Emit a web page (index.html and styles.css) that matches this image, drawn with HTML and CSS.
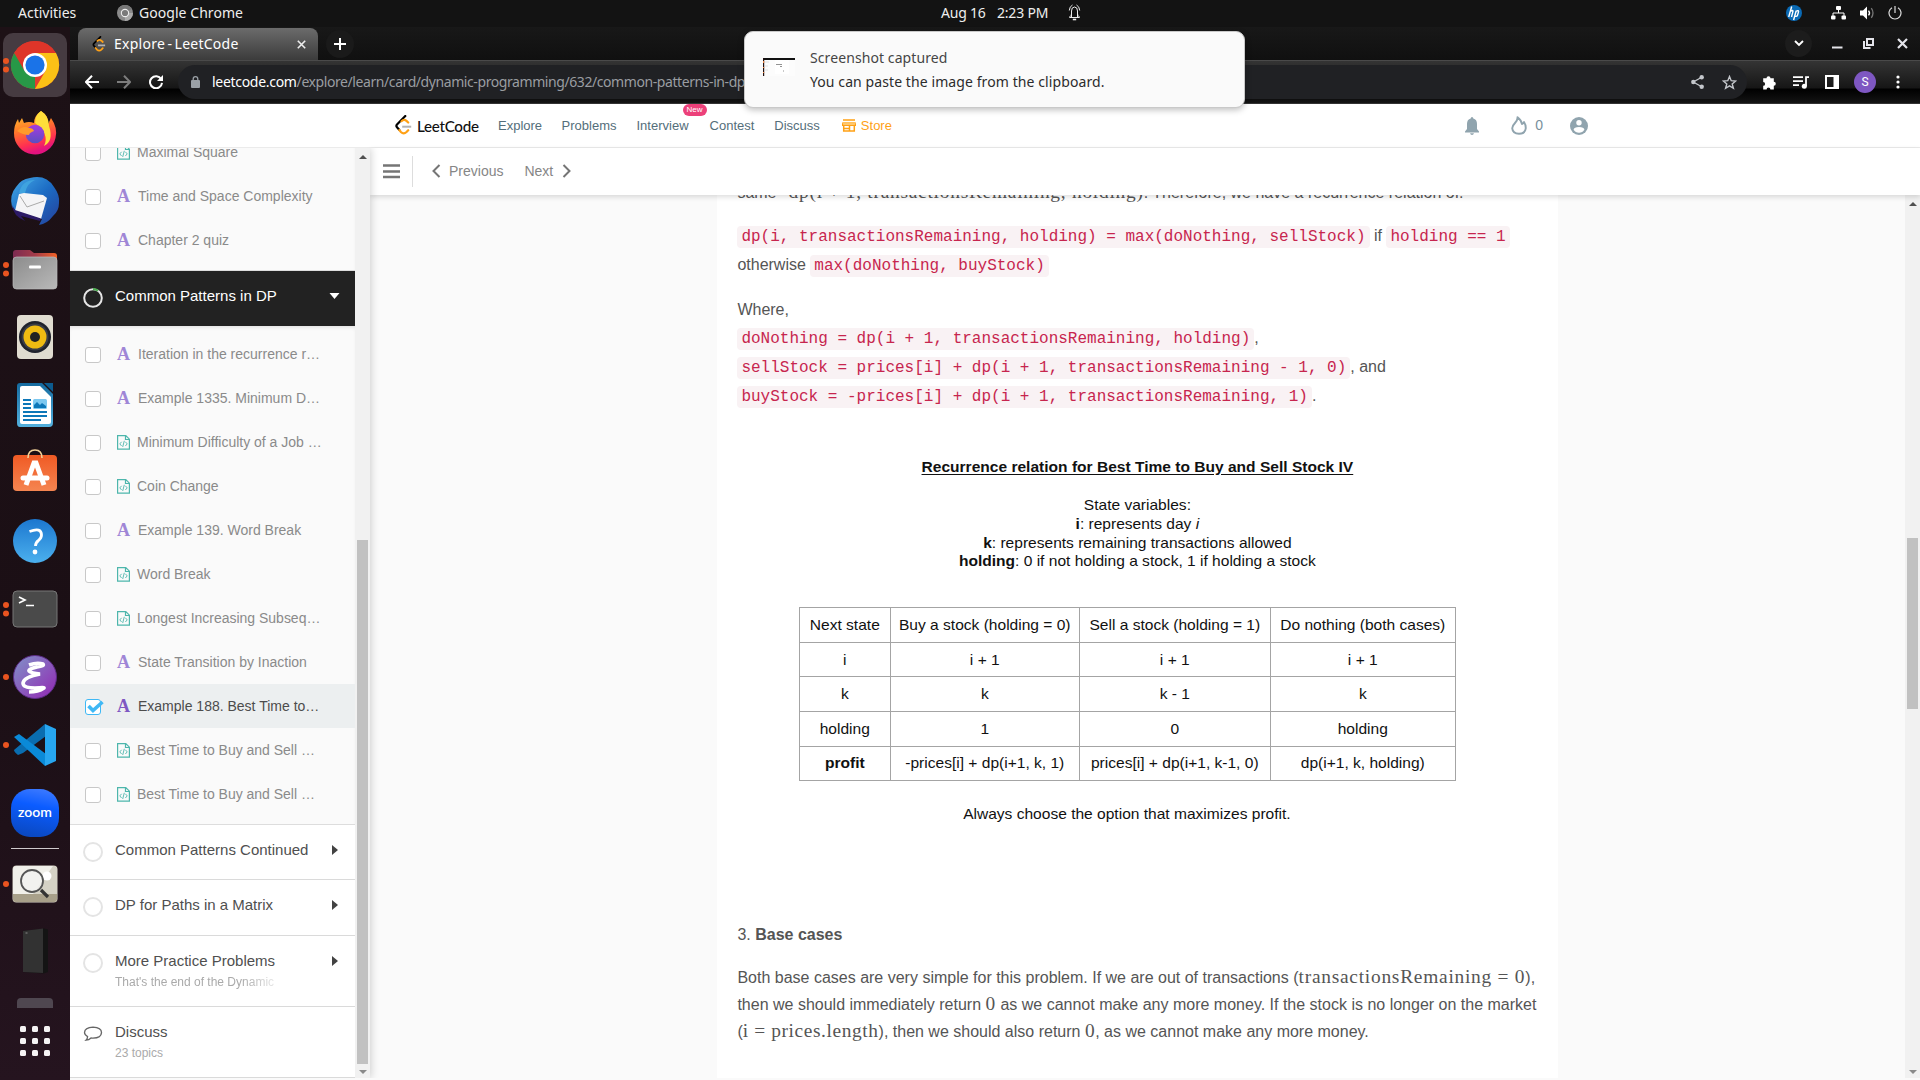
FILE: index.html
```html
<!DOCTYPE html>
<html lang="en">
<head>
<meta charset="utf-8">
<title>Explore - LeetCode</title>
<link rel="stylesheet" href="styles.css">
</head>
<body>
<svg class="defs" width="0" height="0" aria-hidden="true">
  <defs>
    <symbol id="code" viewBox="0 0 13 15"><path d="M.6.6h8.2l3.6 3.6v9.900H.6z M8.500.8v3.700h3.800" fill="none" stroke="#4db6ac" stroke-width="1.200"/><path d="M4.600 6.800 2.800 8.900l1.800 2.100M8.400 6.800l1.800 2.100-1.800 2.100M7.300 5.800 5.700 12" fill="none" stroke="#4db6ac" stroke-width=".9"/></symbol>
    <symbol id="leet" viewBox="0 0 17 20"><path d="M10.300 1 2 9.600q-1.200 1.300 0 2.600l2.200 2.500" fill="none" stroke="#000" stroke-width="2.200" stroke-linecap="round" class="leet-main"/><path d="M6.500 6.200q2.500-2.400 5-.3l1.700 1.600M4.300 15l1.600 2q2.800 2.700 5.600 0l1.700-1.800" fill="none" stroke="#ffa116" stroke-width="2.200" stroke-linecap="round"/><path d="M7.200 11.700h9" stroke="#b3b3b3" stroke-width="2"/></symbol>
    <linearGradient id="gGray" x2="1" y2="1"><stop stop-color="#8c8c8c"/><stop offset="1" stop-color="#b9b9b9"/></linearGradient>
    <linearGradient id="gFold"><stop stop-color="#7c2b51"/><stop offset=".5" stop-color="#a33b49"/><stop offset="1" stop-color="#f26327"/></linearGradient>
    <linearGradient id="gFox" x2=".3" y2="1"><stop stop-color="#ffcf2e"/><stop offset=".45" stop-color="#ff7a2a"/><stop offset=".8" stop-color="#ff3150"/><stop offset="1" stop-color="#e3127f"/></linearGradient>
    <linearGradient id="gEm" x2="1" y2="1"><stop stop-color="#8093c8"/><stop offset="1" stop-color="#9326b3"/></linearGradient>
    <linearGradient id="gBlue" x2="0" y2="1"><stop stop-color="#1c77cf"/><stop offset="1" stop-color="#4bb0ee"/></linearGradient>
    <linearGradient id="gBird" x2="1" y2="1"><stop stop-color="#45a9e6"/><stop offset=".5" stop-color="#1c6cc4"/><stop offset="1" stop-color="#253f9a"/></linearGradient>
    <linearGradient id="gOr" x2="0" y2="1"><stop stop-color="#f05a24"/><stop offset="1" stop-color="#f58551"/></linearGradient>
    <linearGradient id="gWr" x2="0" y2="1"><stop stop-color="#146a9f"/><stop offset="1" stop-color="#53b1de"/></linearGradient>
    <linearGradient id="gZoom" x1=".6" x2=".4" y2="1"><stop stop-color="#3a78ff"/><stop offset=".35" stop-color="#0b5cff"/><stop offset="1" stop-color="#0a48c0"/></linearGradient>
    <linearGradient id="gGlobe" x2="0" y2="1"><stop stop-color="#a63be0"/><stop offset="1" stop-color="#5a4fc0"/></linearGradient>
  </defs>
</svg>

<header class="topbar">
  <span class="activities">Activities</span>
  <svg class="app-ic" width="16" height="16" viewBox="0 0 16 16"><circle cx="8" cy="8" r="8" fill="#8b8b8b"/><path d="M8 8 1 4a8 8 0 0 1 14 0z" fill="#777"/><path d="M8 8h8a8 8 0 0 1-8 8z" fill="#aaa"/><circle cx="8" cy="8" r="4.200" fill="#eee"/><circle cx="8" cy="8" r="3.100" fill="#7a7a7a"/></svg>
  <span class="app-name">Google Chrome</span>
  <span class="date">Aug 16</span><span class="time">2:23 PM</span>
  <svg class="bell-ic" width="13" height="17" viewBox="0 0 13 17" fill="none" stroke="#eee"><path d="M1.300 13.500h10.400M3.500 13V7q0-4 3-4t3 4v6M1.300 6.500Q1.500 2.500 4.500 1M11.700 6.500Q11.500 2.500 8.500 1M1.500 13q2-1.500 2-3M11.500 13q-2-1.500-2-3"/><path d="M4.800 15.500h3.400" stroke-width="1.600"/></svg>
  <div class="tray">
    <svg width="16" height="16" viewBox="0 0 16 16"><circle cx="8" cy="8" r="8" fill="#0a6ab5"/><path d="M5.700 1.500 2.700 12M4.300 6.300q3-1.700 2.600.300L5.500 12M10.200 5.800 7.600 15M9.800 6.300q3.200-1.300 2.700.600l-1 3.400q-.400 1.400-2.600.900" fill="none" stroke="#fff" stroke-width="1.400"/></svg>
    <svg class="net" width="15" height="14" viewBox="0 0 15 14" fill="#fff"><rect x="5" width="5" height="4" rx="1"/><rect y="9.500" width="4.500" height="4" rx="1"/><rect x="10.500" y="9.500" width="4.500" height="4" rx="1"/><path d="M7.500 4v3M2 10V7h11v3" fill="none" stroke="#fff"/></svg>
    <svg class="vol" width="15" height="14" viewBox="0 0 15 14"><path d="M0 4.500h3L7 .500v13l-4-4H0z" fill="#fff"/><path d="M8.500 4.600q2 2.400 0 4.800" fill="none" stroke="#fff" stroke-width="1.400"/><path d="M11.300 2.200q3.400 4.800 0 9.600" fill="none" stroke="#777" stroke-width="1.300"/></svg>
    <svg class="pow" width="14" height="14" viewBox="0 0 14 14" fill="none" stroke="#ddd" stroke-width="1.200"><path d="M7 0v7M4 1.800a6 6 0 1 0 6 0"/></svg>
  </div>
</header>

<div class="desktop">
<nav class="dock">
  <div class="slot two active"><svg viewBox="0 0 70 68"><circle cx="35" cy="34" r="24" fill="#e33b2e"/><path d="M14.200 22 35 34 35 58A24 24 0 0 1 14.200 22z" fill="#279847"/><path d="M35 22h21A24 24 0 0 1 35 58l10.400-18z" fill="#fbc116"/><path d="M14.200 22A24 24 0 0 1 55.800 22H35L24.600 40z" fill="#de3529"/><circle cx="35" cy="34" r="12" fill="#fff"/><circle cx="35" cy="34" r="9.600" fill="#1a73e8"/></svg></div>
  <div class="slot"><svg viewBox="0 0 70 68"><path d="M41 12q8 5 7 13l3-6q7 10 4.500 20A21 21 0 0 1 14 34q0-8 4-14l1 4 3-5 2 5q5-2 10 0 0-7 7-12z" fill="url(#gFox)"/><path d="M35 24q0-8 6-12 8 5 8 15 5 15-5 20 6-12-9-23z" fill="#ffde3a"/><circle cx="35" cy="35" r="9.300" fill="url(#gGlobe)"/><path d="M17 32q6-6 12-3 4 0 5 3-5 2-5 4-6 0-12-4z" fill="#ff9a2b"/></svg></div>
  <div class="slot"><svg viewBox="0 0 70 68"><path d="M30 11q16-4 24 9 6 8 5 16 0 8-6 13-6 8-14 9l3-6-22-4-8-8q-3-12 4-20 5-8 14-9z" fill="url(#gBird)"/><path d="M15 44 19 27 24 26 43 28 47 31 41 52z" fill="#f4f4f6"/><path d="m20 29 7 11 17-6" fill="none" stroke="#aaa"/><path d="M12 38q1 11 13 16l-4-5 19 5 1-2.500L15 43z" fill="#2c1a66"/><path d="M19 26q3-13 16-13-8 3-10 13z" fill="#3fa3df"/></svg></div>
  <div class="slot two"><svg viewBox="0 0 70 68"><path d="M13 36V18q0-3 3-3h14l4 3h20q3 0 3 3v12z" fill="url(#gFold)"/><rect x="13" y="22" width="44" height="32" rx="3.500" fill="url(#gGray)" stroke="#bbb" stroke-width=".7"/><rect x="29" y="30.500" width="12" height="3" rx="1" fill="#fff"/></svg></div>
  <div class="slot"><svg viewBox="0 0 70 68"><rect x="17" y="12" width="36" height="44" rx="4" fill="#e0dcd0"/><circle cx="35" cy="34" r="16" fill="#1f222c"/><circle cx="35" cy="34" r="13.500" fill="#3a3d46"/><circle cx="35" cy="34" r="11.500" fill="#efbb12"/><circle cx="35" cy="34" r="5" fill="#222"/></svg></div>
  <div class="slot"><svg viewBox="0 0 70 68"><path d="M20 12h22l11 11v29q0 4-4 4H20q-3 0-3-4V15q0-3 3-3z" fill="url(#gWr)"/><path d="M20 17q0-2 2-2h18l11 11v25q0 2-2 2H22q-2 0-2-2z" fill="#fff"/><path d="M44 12h9v9z" fill="#0c5b8f"/><path d="M23 29h8M23 33h8M23 37h8M23 41h24M23 45h24M23 49h18" stroke="#0d77b8" stroke-width="1.800"/><rect x="33" y="28" width="14" height="10" rx="1.500" fill="#7cc8f0"/><path d="M34 37v-3l3-3 3 3 2-2 4 3v2z" fill="#0d77b8"/></svg></div>
  <div class="slot"><svg viewBox="0 0 70 68"><rect x="13" y="16" width="44" height="36" rx="4" fill="url(#gOr)"/><path d="M28 19q0-8 7-8t7 8" fill="none" stroke="#f3d29a" stroke-width="1.600"/><path d="m26 46 8-22h2l8 22" fill="none" stroke="#fff" stroke-width="5"/><path d="M23 39h24" stroke="#fff" stroke-width="5" stroke-linecap="round"/></svg></div>
  <div class="slot"><svg viewBox="0 0 70 68"><circle cx="35" cy="34" r="22" fill="url(#gBlue)"/><path d="M29.500 24.500q12-4.500 12 3.500 0 3-3 5.500-3 2-3 5.500" fill="none" stroke="#fff" stroke-width="2.800"/><circle cx="35" cy="45" r="2.400" fill="#fff"/></svg></div>
  <div class="slot two"><svg viewBox="0 0 70 68"><rect x="13" y="16" width="44" height="36" rx="4" fill="#4a4a4a" stroke="#777"/><path d="m19 22 6 3-6 3M26 30.500h8" fill="none" stroke="#fff" stroke-width="1.700"/></svg></div>
  <div class="slot one"><svg viewBox="0 0 70 68"><circle cx="35" cy="34" r="21.500" fill="url(#gEm)" stroke="#5b2b84"/><path d="M29 22q8-3 14-1 2 2-6 3-9 2-8 4 2 2 11 3-16 3-17 9 0 5 12 5 10-1 9 0-6 4-15 4" fill="none" stroke="#fff" stroke-width="3.600"/></svg></div>
  <div class="slot one"><svg viewBox="0 0 70 68"><path d="m45 13-31 26q0 2 4 5l5-2 23-17z" fill="#0a6db0"/><path d="m14 26 5-3 27 20-1 12z" fill="#0a8ad8"/><path d="m45 13 11 5v32l-11 5z" fill="#27a6f0"/></svg></div>
  <div class="slot"><svg viewBox="0 0 70 68"><rect x="11" y="10" width="48" height="48" rx="19" fill="url(#gZoom)"/><text x="35" y="38" text-anchor="middle" class="zoom-t" textLength="34">zoom</text></svg></div>
  <div class="sep"></div>
  <div class="slot one"><svg viewBox="0 0 70 68"><rect x="12.500" y="15.500" width="45" height="37" rx="4" fill="#d5d2c5"/><path d="M13 20q0-4 4-4h36L33 44H13z" fill="#f1f0ea"/><path d="M13 44h44v5q0 3-3 3H16q-3 0-3-3z" fill="#a8a08a"/><circle cx="47" cy="26" r="4.500" fill="#fff"/><circle cx="32" cy="31" r="11" fill="#f3f3f0" fill-opacity=".8" stroke="#555" stroke-width="1.800"/><path d="m41 40 7 7" stroke="#333" stroke-width="3.200"/></svg></div>
  <div class="slot"><svg viewBox="0 0 70 68"><path d="m23 13 21-2.500 4 1V54l-4 1.500L23 54z" fill="#141414"/><path d="m23 13 20-2.500V55L23 54z" fill="#323232"/><path d="M25.500 15h2" stroke="#888"/></svg></div>
  <div class="slot cut"><svg viewBox="0 0 70 68"><path d="M17 22v-6q0-4 4-4h28q4 0 4 4v6z" fill="#4f4750"/></svg></div>
  <div class="grid"><i></i><i></i><i></i><i></i><i></i><i></i><i></i><i></i><i></i></div>
</nav>

<div class="window">
  <div class="tabs">
    <div class="tab">
      <svg class="fav" width="14" height="16" viewBox="0 0 17 20"><use href="#leet"/></svg>
      <span class="tab-t">Explore - LeetCode</span>
      <svg class="x" width="9" height="9" viewBox="0 0 9 9"><path d="m.8.800 7.400 7.400m0-7.400L.8 8.200" stroke="#eee" stroke-width="1.600"/></svg>
    </div>
    <div class="plus"><svg width="12" height="12" viewBox="0 0 12 12"><path d="M6 0v12M0 6h12" stroke="#fff" stroke-width="2"/></svg></div>
    <div class="controls">
      <span class="chev"><svg width="10" height="7" viewBox="0 0 10 7"><path d="m1 1 4 4 4-4" fill="none" stroke="#fff" stroke-width="1.900"/></svg></span>
      <svg class="c1" width="11" height="11" viewBox="0 0 11 11"><path d="M0 9.500h10.500" stroke="#e4e4ea" stroke-width="2"/></svg>
      <svg class="c2" width="11" height="11" viewBox="0 0 11 11"><path d="M4 1h6v6H4z M1 3v7h6.500" fill="none" stroke="#e4e4ea" stroke-width="2"/></svg>
      <svg class="c3" width="11" height="11" viewBox="0 0 11 11"><path d="m1 1 9 9m0-9-9 9" stroke="#e4e4ea" stroke-width="2.200"/></svg>
    </div>
  </div>
  <div class="toolbar">
    <svg width="14" height="14" viewBox="0 0 14 14"><path d="M14 7H1.500M7 .800.900 7 7 13.200" fill="none" stroke="#fff" stroke-width="2"/></svg>
    <svg width="14" height="14" viewBox="0 0 14 14"><path d="M0 7h12.500M7 .800 13.100 7 7 13.200" fill="none" stroke="#7d7d7d" stroke-width="2"/></svg>
    <svg width="14" height="14" viewBox="0 0 14 14"><path d="M12.200 4.200A6 6 0 1 0 13 7.800" fill="none" stroke="#fff" stroke-width="2"/><path d="M14 0v6H8z" fill="#fff"/></svg>
    <div class="omni">
      <svg width="9" height="12" viewBox="0 0 9 12"><rect y="4" width="9" height="8" rx="1" fill="#9aa0a6"/><path d="M2.200 4.500V3a2.300 2.300 0 0 1 4.600 0v1.500" fill="none" stroke="#9aa0a6" stroke-width="1.300"/></svg>
      <span class="url"><b>leetcode.com</b>/explore/learn/card/dynamic-programming/632/common-patterns-in-dp</span>
      <svg class="share" width="13" height="14" viewBox="0 0 13 14"><g fill="#c4c7cc"><circle cx="10.700" cy="2.300" r="2.200"/><circle cx="2.300" cy="7" r="2.200"/><circle cx="10.700" cy="11.700" r="2.200"/></g><path d="M10.700 2.300 2.300 7l8.400 4.700" fill="none" stroke="#c4c7cc" stroke-width="1.300"/></svg>
      <svg width="15" height="15" viewBox="0 0 15 15"><path d="m7.500 1.500 1.700 4.200 4.500.300-3.500 2.900 1.200 4.400-3.900-2.500-3.900 2.500 1.200-4.400L1.300 6l4.500-.300z" fill="none" stroke="#c4c7cc" stroke-width="1.400"/></svg>
    </div>
    <div class="ext">
      <svg width="15" height="15" viewBox="0 0 15 15"><path d="M1.200 3.200h3.300a2 2 0 1 1 4 0h3.300v3.600a2 2 0 1 1 0 4v3.700H8.400a1.900 1.900 0 0 0-3.800 0H1.200v-3.700a1.900 1.900 0 0 0 0-3.800z" fill="#fff"/></svg>
      <svg width="16" height="13" viewBox="0 0 16 13"><path d="M0 1.200h10M0 5.200h10M0 9.200h6M13 10V1.200h3" fill="none" stroke="#fff" stroke-width="1.800"/><circle cx="11.300" cy="10.300" r="2.500" fill="#fff"/></svg>
      <svg width="14" height="14" viewBox="0 0 14 14"><path d="M1 1h12v12H1z" fill="none" stroke="#fff" stroke-width="2"/><path d="M8.500 1H13v12H8.500z" fill="#fff"/></svg>
      <span class="me">S</span>
      <svg class="dots" width="4" height="14" viewBox="0 0 4 14" fill="#fff"><circle cx="2" cy="2" r="1.600"/><circle cx="2" cy="7" r="1.600"/><circle cx="2" cy="12" r="1.600"/></svg>
    </div>
  </div>

  <div class="nav">
    <svg class="logo" width="17" height="20"><use href="#leet"/></svg>
    <span class="brand">LeetCode</span>
    <a>Explore</a><a>Problems</a><a class="iv">Interview<em>New</em></a><a class="ct">Contest</a><a>Discuss</a>
    <a class="store"><svg width="14" height="13" viewBox="0 0 14 13"><path d="M1 1h12M1 4l-.4 2.300h12.800L13 4z M1.700 6.500V12h10.600V6.500M7.500 6.500V12M1.700 9.500h5.800" fill="none" stroke="#ffa116" stroke-width="1.500"/><path d="M1 3.300h12v2.500H1z" fill="#ffc568"/></svg>Store</a>
    <div class="user">
      <svg class="ub" width="14" height="18" viewBox="0 0 14 18" fill="#90a4ae"><path d="M7 0q1.300 0 1.300 1.600Q12 2.600 12 7v5l2 2.500V15.500H0V14.500L2 12V7q0-4.400 3.700-5.400Q5.700 0 7 0z"/><path d="M5 16.300h4Q8.500 18 7 18t-2-1.700z"/></svg>
      <svg class="fl" width="16" height="19" viewBox="0 0 16 19"><path d="M6.500 1.200Q6.800 4 4 7 1.200 10 1.200 12.200 1.700 17.800 8 17.800t6.800-5.600q0-3.700-1.800-6.200-.6 1.700-2 2Q10.500 4.500 6.500 1.200z" fill="none" stroke="#90a4ae" stroke-width="1.900" stroke-linejoin="round"/></svg>
      <span>0</span>
      <svg class="av" width="18" height="18" viewBox="0 0 18 18"><circle cx="9" cy="9" r="9" fill="#90a4ae"/><circle cx="9" cy="5.700" r="2.700" fill="#fff"/><path d="M3.600 12.800Q4 10 9 10t5.400 2.800Q12.500 15.800 9 15.800t-5.400-3z" fill="#fff"/></svg>
    </div>
  </div>

  <div class="page">
    <aside class="side">
      <div class="side-list">
        <div class="items first">
          <div class="it code"><i></i><svg><use href="#code"/></svg>Maximal Square</div>
          <div class="it"><i></i><s>A</s>Time and Space Complexity</div>
          <div class="it"><i></i><s>A</s>Chapter 2 quiz</div>
        </div>
        <div class="chap open"><svg class="ring" viewBox="0 0 20 20"><circle cx="10" cy="10" r="8.800" fill="none" stroke="#e6e6e6" stroke-width="2"/><path d="M10 1.200a8.800 8.800 0 0 1 5 1.500" fill="none" stroke="#4caf50" stroke-width="2.200"/></svg><div><h4>Common Patterns in DP</h4></div><svg class="car" viewBox="0 0 11 12"><path d="M.5 3h10L5.500 9z" fill="#fff"/></svg></div>
        <div class="items">
          <div class="it"><i></i><s>A</s>Iteration in the recurrence r…</div>
          <div class="it"><i></i><s>A</s>Example 1335. Minimum D…</div>
          <div class="it code"><i></i><svg><use href="#code"/></svg>Minimum Difficulty of a Job …</div>
          <div class="it code"><i></i><svg><use href="#code"/></svg>Coin Change</div>
          <div class="it"><i></i><s>A</s>Example 139. Word Break</div>
          <div class="it code"><i></i><svg><use href="#code"/></svg>Word Break</div>
          <div class="it code"><i></i><svg><use href="#code"/></svg>Longest Increasing Subseq…</div>
          <div class="it"><i></i><s>A</s>State Transition by Inaction</div>
          <div class="it sel"><i><svg viewBox="0 0 18 14"><path d="m2.500 6 4.500 4.500L16.500 2" fill="none" stroke="#3fb8f5" stroke-width="3.600"/></svg></i><s>A</s>Example 188. Best Time to…</div>
          <div class="it code"><i></i><svg><use href="#code"/></svg>Best Time to Buy and Sell …</div>
          <div class="it code"><i></i><svg><use href="#code"/></svg>Best Time to Buy and Sell …</div>
        </div>
        <div class="chap"><b class="o"></b><div><h4>Common Patterns Continued</h4></div><svg class="car" viewBox="0 0 11 12"><path d="M3 1v10l6-5z" fill="#424242"/></svg></div>
        <div class="chap c56"><b class="o"></b><div><h4>DP for Paths in a Matrix</h4></div><svg class="car" viewBox="0 0 11 12"><path d="M3 1v10l6-5z" fill="#424242"/></svg></div>
        <div class="chap tall"><b class="o"></b><div><h4>More Practice Problems</h4><p class="fade">That's the end of the Dynamic</p></div><svg class="car" viewBox="0 0 11 12"><path d="M3 1v10l6-5z" fill="#424242"/></svg></div>
        <div class="chap tall"><svg class="ring talk" viewBox="0 0 20 20"><path d="M10 3.200q8.500.500 8.500 5.400-.3 5.400-8.500 5.600-1 0-2-.2-2 2-5 2.200 1.600-1.500 1.600-3.600Q1.500 11 1.500 8.600 1.700 3.600 10 3.200z" fill="none" stroke="#666" stroke-width="1.300"/></svg><div><h4>Discuss</h4><p>23 topics</p></div></div>
      </div>
      <div class="sbar"><u class="up"></u><div class="thumb"></div><u class="dn"></u></div>
    </aside>

    <main class="main">
      <div class="sub">
        <svg width="17" height="15" viewBox="0 0 17 15"><path d="M0 1.500h17M0 7.500h17M0 13h17" stroke="#757575" stroke-width="2.700"/></svg>
        <div class="rule"></div>
        <svg class="lt" width="9" height="14" viewBox="0 0 9 14"><path d="M7.500 1 1.500 7l6 6" fill="none" stroke="#757575" stroke-width="2"/></svg>
        <span>Previous</span><span class="nx">Next</span>
        <svg class="gt" width="9" height="14" viewBox="0 0 9 14"><path d="m1.500 1 6 6-6 6" fill="none" stroke="#757575" stroke-width="2"/></svg>
      </div>
      <div class="scroll">
        <article class="art">
          <p class="top-p">same <span class="m same">&nbsp;dp(i + 1, transactionsRemaining, holding)</span>. Therefore, we have a recurrence relation of:</p>
          <p class="cp"><code>dp(i, transactionsRemaining, holding) = max(doNothing, sellStock)</code> if <code>holding == 1</code><br>otherwise <code>max(doNothing, buyStock)</code></p>
          <p class="cp wh"><span class="where">Where,</span><code>doNothing = dp(i + 1, transactionsRemaining, holding)</code>,<br><code>sellStock = prices[i] + dp(i + 1, transactionsRemaining - 1, 0)</code>, and<br><code>buyStock = -prices[i] + dp(i + 1, transactionsRemaining, 1)</code>.</p>
          <section class="fig">
            <h3>Recurrence relation for Best Time to Buy and Sell Stock IV</h3>
            <p>State variables:<br><b>i</b>: represents day <em>i</em><br><b>k</b>: represents remaining transactions allowed<br><b>holding</b>: 0 if not holding a stock, 1 if holding a stock</p>
            <table>
              <tr><td class="w1">Next state</td><td class="w2">Buy a stock (holding = 0)</td><td class="w3">Sell a stock (holding = 1)</td><td class="w4">Do nothing (both cases)</td></tr>
              <tr><td>i</td><td>i + 1</td><td>i + 1</td><td>i + 1</td></tr>
              <tr><td>k</td><td>k</td><td>k - 1</td><td>k</td></tr>
              <tr><td>holding</td><td>1</td><td>0</td><td>holding</td></tr>
              <tr><td><b>profit</b></td><td>-prices[i] + dp(i+1, k, 1)</td><td>prices[i] + dp(i+1, k-1, 0)</td><td>dp(i+1, k, holding)</td></tr>
            </table>
            <p class="always">Always choose the option that maximizes profit.</p>
          </section>
          <p class="base">3. <b>Base cases</b></p>
          <p class="body">Both base cases are very simple for this problem. If we are out of transactions (<span class="m">transactionsRemaining = 0</span>),<br>then we should immediately return <span class="m">0</span> as we cannot make any more money. If the stock is no longer on the market<br>(<span class="m n">i = prices.length</span>), then we should also return <span class="m n">0</span>, as we cannot make any more money.</p>
        </article>
        <div class="sbar right"><u class="up"></u><div class="thumb"></div><u class="dn"></u></div>
      </div>
    </main>
  </div>
</div>
</div>

<div class="toast">
  <svg width="32" height="18" viewBox="0 0 32 18"><rect width="32" height="18" fill="#fcfcfc"/><rect width="32" height="2" fill="#111"/><rect width="1.200" height="18" fill="#211"/><path d="M.6 3v2M.6 9v1M.6 14v1" stroke="#e84" stroke-width="1.200"/><path d="M2 4h4M2 8h3M2 12h3" stroke="#ccc" stroke-width=".6"/><rect x="12" y="2" width="14" height="14" fill="#fff"/><path d="M13 6.500h6M17 8.500h2M20 13h1" stroke="#777" stroke-width=".8"/></svg>
  <div><p class="t1">Screenshot captured</p><p class="t2">You can paste the image from the clipboard.</p></div>
</div>
</body>
</html>
```
FILE: styles.css
```css
* { box-sizing: border-box; }
body { margin: 0; width: 1920px; height: 1080px; overflow: hidden; background: #131313; font-family: "Liberation Sans", Arial, sans-serif; }
h3, h4, p { margin: 0; font-weight: normal; }
svg { display: block; flex: none; }
.defs { position: absolute; }

/* system bar */
.topbar { height: 27px; padding-bottom: 2px; display: flex; align-items: center; color: #eee; font: 14px "Noto Sans", sans-serif; white-space: nowrap; }
.activities { margin-left: 18px; width: 99px; }
.app-name { margin-left: 6px; width: 802px; letter-spacing: .05px; }
.date { width: 56px; letter-spacing: -.2px; }
.time { width: 71px; letter-spacing: -.2px; }
.tray { margin-left: auto; display: flex; align-items: center; padding-right: 18px; }
.net { margin-left: 29px; }
.vol { margin-left: 14px; }
.pow { margin-left: 13px; }

/* launcher */
.desktop { display: flex; height: 1053px; }
.dock { width: 70px; flex: none; padding-top: 4px; background: linear-gradient(#1d1116, #1b0f15 60%, #25141f); }
.slot { height: 68px; position: relative; }
.slot svg { width: 70px; height: 68px; position: relative; }
.active::after { content: ""; position: absolute; left: 3px; top: 2px; width: 64px; height: 64px; border-radius: 10px; background: #463b41; z-index: 0; }
.active svg { z-index: 1; }
.two::before, .one::before { content: ""; position: absolute; z-index: 2; left: 3px; top: 31px; width: 6px; height: 6px; border-radius: 50%; background: #e95420; }
.two::before { top: 27px; box-shadow: 0 8.500px 0 #e95420; }
.sep { height: 1px; margin: 1px 11px; background: #cfcbcd; }
.cut { height: 22px; overflow: hidden; }
.zoom-t { font: 600 14px Lato, sans-serif; fill: #fff; }
.grid { display: grid; grid-template-columns: repeat(3, 6px); gap: 6px; margin: 18px 0 0 20px; }
.grid i { height: 6px; border-radius: 1.500px; background: #f4f2f3; }

/* browser chrome */
.window { width: 1850px; display: flex; flex-direction: column; background: #fff; }
.tabs { height: 33px; display: flex; align-items: center; background: linear-gradient(#181818, #101010); }
.tab { width: 240px; height: 32px; margin: 1px 0 0 8px; padding: 0 12px 0 14px; display: flex; align-items: center; border-radius: 8px 8px 0 0; background: linear-gradient(#6b6b6b, #3b3b3b); }
.fav .leet-main { stroke: #222; }
.tab-t { margin: -2px 0 0 8px; flex: 1; color: #fff; font: 14px "Noto Sans", sans-serif; letter-spacing: .25px; word-spacing: -1.500px; }
.plus { width: 28px; height: 28px; margin-left: 8px; border-radius: 50%; background: #1a1a1a; display: grid; place-items: center; }
.controls { margin-left: auto; display: flex; align-items: center; padding-right: 12px; }
.chev { width: 27px; height: 27px; border-radius: 50%; background: #1c1c1c; display: grid; place-items: center; margin-right: 20px; }
.c2 { margin: 0 23px 0 20px; }
.toolbar { height: 44px; padding: 0 20px 0 15px; display: flex; align-items: center; border-top: 1px solid #4a4a4a; border-bottom: 1px solid #333; background: linear-gradient(#343434, #161616 27px, #000 28px, #141414); }
.toolbar > svg { margin-right: 18px; }
.omni { width: 1570px; height: 34px; margin-left: -3px; padding: 0 10px 0 13px; border-radius: 17px; background: #202124; display: flex; align-items: center; }
.url { width: 1491px; padding: 0 0 1px 12px; color: #9a9da1; font: 14px "Noto Sans", sans-serif; letter-spacing: -.42px; white-space: nowrap; }
.url b { color: #fff; font-weight: normal; letter-spacing: -.3px; }
.share { margin-right: 18px; }
.ext { display: flex; align-items: center; margin-left: 15px; }
.ext svg { margin-right: 16px; }
.ext .dots { margin: 0 0 0 20px; }
.me { width: 22px; height: 22px; margin-left: -1px; border-radius: 50%; background: #7e57c2; color: #fff; font: 12px/22px Roboto, sans-serif; text-align: center; }

/* site navigation */
.nav { height: 44px; flex: none; display: flex; align-items: center; padding-left: 325px; border-bottom: 1px solid #ebebeb; color: #546e7a; font-size: 13px; }
.logo { margin-top: -2px; }
.brand { width: 81px; margin: 1px 0 0 5px; color: #111; font: 500 15.200px Lato, sans-serif; letter-spacing: -.300px; }
.nav a { margin-right: 20px; }
.nav a:nth-of-type(1) { margin-right: 19.500px; }
.iv { position: relative; }
.nav .iv { margin: 0 21px 0 0; }
.iv em { position: absolute; left: 46px; top: -14px; height: 12px; width: 24px; border-radius: 6px; background: #ec407a; color: #fff; font: 8px/12px "Liberation Sans", sans-serif; text-align: center; }
.nav .store { display: flex; align-items: center; gap: 5px; margin-left: 2px; color: #ffa116; }
.user { margin-left: auto; display: flex; align-items: center; padding-right: 332px; color: #78909c; font-size: 14px; }
.fl { margin-left: 32px; }
.user span { margin: -2px 27px 0 8px; }

.page { flex: 1; min-height: 0; display: flex; background: #fafafa; padding-bottom: 2px; }
.side { width: 300px; display: flex; flex: none; position: relative; z-index: 3; box-shadow: 1px 0 8px rgba(0,0,0,.18); clip-path: inset(0 -10px 0 0); }
.side-list { width: 285px; overflow: hidden; background: #fff; }
.items { padding: 6px 0 8px; background: #fafafa; border-bottom: 1px solid #ddd; box-shadow: inset 0 3px 4px -2px rgba(0,0,0,.12); }
.first { margin-top: -24px; }
.it { height: 44px; display: flex; align-items: center; color: #8a8a8a; font-size: 14px; white-space: nowrap; }
.it i { width: 16px; height: 16px; margin: 1px 16px 0 15px; border: 1px solid #c8c8c8; border-radius: 3px; background: #fff; flex: none; }
.it s { width: 15px; margin-right: 6px; font: bold 18px "Liberation Serif", serif; color: #9f86d6; text-decoration: none; }
.it > svg { width: 13px; height: 15px; margin-right: 7px; }
.code { letter-spacing: -.01px; }
.sel { background: #eceff0; color: #4c4c4c; }
.sel i { border-color: #3fb8f5; }
.sel i svg { width: 18px; height: 14px; }
.sel s { color: #7e57c2; }
.chap { height: 55px; display: flex; padding: 16px 15px 0 13px; border-bottom: 1px solid #dadada; color: #4f4f4f; }
.chap > div { flex: 1; margin-left: 12px; }
.chap h4 { font-size: 15px; line-height: 18px; }
.chap p { width: 162px; margin-top: 4px; color: #aaa; font-size: 12px; line-height: 16px; white-space: nowrap; }
.fade { -webkit-mask: linear-gradient(90deg, #000 78%, transparent 106%); mask: linear-gradient(90deg, #000 78%, transparent 106%); }
.open { height: 55px; background: #222; color: #fff; border: 0; }
.ring, .o { width: 20px; height: 20px; margin-top: 1px; flex: none; }
.o { border: 2px solid #e4e4e4; border-radius: 50%; }
.car { width: 11px; height: 12px; margin-top: 3px; }
.c56 { height: 56px; }
.tall { height: 71px; }
.sbar { width: 15px; flex: none; padding: 5px 0 3px; background: #f1f1f1; display: flex; flex-direction: column; align-items: center; }
.sbar .thumb { width: 11px; height: 524px; margin-top: auto; background: #c1c1c1; }
.sbar u { border: 4px solid transparent; flex: none; }
.up { border-bottom-color: #505050 !important; border-top: 0 !important; margin-top: 2px; }
.dn { border-top-color: #8a8a8a !important; border-bottom: 0 !important; margin: 6px 0 1px; }

.main { flex: 1; display: flex; flex-direction: column; min-width: 0; }
.sub { height: 47px; flex: none; display: flex; align-items: center; padding-left: 13px; background: #fff; box-shadow: 0 2px 5px rgba(0,0,0,.14); position: relative; z-index: 2; color: #868686; font-size: 14px; }
.sub span { padding-bottom: 1px; }
.rule { width: 1px; height: 31px; margin: 0 19px 0 12px; background: #ddd; }
.lt { margin: -1px 8px 0 0; }
.gt { margin-top: -1px; }
.nx { margin: 0 9px 0 21px; }
.scroll { flex: 1; min-height: 0; display: flex; }
.art { width: 841px; margin-left: 347px; padding-left: 20.400px; background: #fff; overflow: hidden; color: #555; font-size: 16px; white-space: nowrap; }
.art p { line-height: 27px; }
.m { font: 19.400px/1 "Liberation Serif", serif; letter-spacing: .75px; }
.n { letter-spacing: .6px; }
.same { margin-left: 2px; }
.art .top-p { margin-top: -16px; }
.art .cp { line-height: 29px; margin-top: 15px; }
.art .wh { margin-top: 18px; }
.where { display: block; line-height: 26px; }
code { font: 16px/1 "Liberation Mono", monospace; color: #c7254e; background: #f9f2f4; padding: 2px 4px; border-radius: 4px; }
.fig { width: 800px; height: 511px; color: #111; text-align: center; display: flex; flex-direction: column; }
.fig h3 { margin-top: 47px; font-size: 15.550px; line-height: 20px; font-weight: bold; text-decoration: underline; text-underline-offset: 2px; }
.art .fig p { line-height: 18.800px; margin-top: 19px; font-size: 15.550px; }
.fig table { width: 656px; margin: 36px 0 0 61.400px; border-collapse: collapse; table-layout: fixed; font-size: 15.550px; }
.fig td { height: 34.600px; padding: 0; border: 1px solid #a4a4a4; }
.w1 { width: 91px; }
.w2 { width: 189px; }
.w3 { width: 191px; }
.w4 { width: 185px; }
.art .fig .always { margin-top: 24px; padding-right: 21px; }
.art .body { margin-top: 16px; }
.right { margin-left: auto; }
.right .thumb { height: 171px; margin-top: 332px; }
.right .dn { margin-top: auto; }

/* notification */
.toast { position: absolute; left: 744px; top: 31px; width: 501px; height: 77px; padding-left: 18px; display: flex; align-items: center; gap: 15px; border: 1px solid #c9c9c9; border-radius: 9px; background: #fafafa; box-shadow: 0 2px 6px rgba(0,0,0,.25); z-index: 9; font: 14px/24px "Noto Sans", sans-serif; letter-spacing: .09px; color: #2c2c2c; }
.toast svg { margin-top: -6px; }
.t1 { color: #454545; }
```
